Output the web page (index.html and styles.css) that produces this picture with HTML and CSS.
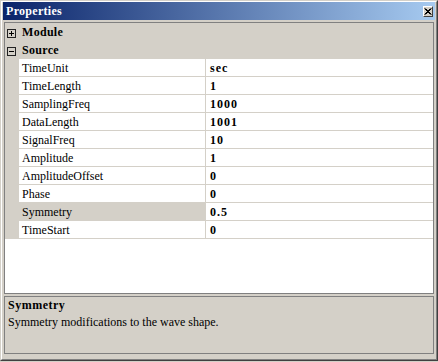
FILE: index.html
```html
<!DOCTYPE html>
<html lang="en">
<head>
    <meta charset="UTF-8">
    <title>Properties</title>
    <link rel="stylesheet" href="styles.css">
</head>
<body>

    <div class="window">
        <div class="frame">

            <!-- caption -->
            <div class="titlebar">
                <span class="title">Properties</span>
                <span class="close-btn">
                    <svg width="8" height="7" viewBox="0 0 8 7"><path d="M0.5 0.5 L6.5 6.5 M6.5 0.5 L0.5 6.5 M1.5 0.5 L7.5 6.5 M7.5 0.5 L1.5 6.5" stroke="#000" stroke-width="1" fill="none"/></svg>
                </span>
            </div>

            <!-- property grid -->
            <div class="grid">
                <div class="category">
                    <span class="expander">
                        <svg width="9" height="9" viewBox="0 0 9 9"><rect x="0.5" y="0.5" width="8" height="8" fill="none" stroke="#222"/><path d="M2 4.5 H7 M4.5 2 V7" stroke="#000"/></svg>
                    </span>
                    <span class="cat-name">Module</span>
                </div>
                <div class="category">
                    <span class="expander">
                        <svg width="9" height="9" viewBox="0 0 9 9"><rect x="0.5" y="0.5" width="8" height="8" fill="none" stroke="#222"/><path d="M2 4.5 H7" stroke="#000"/></svg>
                    </span>
                    <span class="cat-name">Source</span>
                </div>

                <div class="prop"><span class="name">TimeUnit</span><span class="value">sec</span></div>
                <div class="prop"><span class="name">TimeLength</span><span class="value">1</span></div>
                <div class="prop"><span class="name">SamplingFreq</span><span class="value">1000</span></div>
                <div class="prop"><span class="name">DataLength</span><span class="value">1001</span></div>
                <div class="prop"><span class="name">SignalFreq</span><span class="value">10</span></div>
                <div class="prop"><span class="name">Amplitude</span><span class="value">1</span></div>
                <div class="prop"><span class="name">AmplitudeOffset</span><span class="value">0</span></div>
                <div class="prop"><span class="name">Phase</span><span class="value">0</span></div>
                <div class="prop selected"><span class="name">Symmetry</span><span class="value">0.5</span></div>
                <div class="prop"><span class="name">TimeStart</span><span class="value">0</span></div>
            </div>

            <!-- help text -->
            <div class="description">
                <div class="desc-title">Symmetry</div>
                <div class="desc-text">Symmetry modifications to the wave shape.</div>
            </div>

        </div>
    </div>

</body>
</html>
```

FILE: styles.css
```css
/* page */
body {
    margin: 0;
    background-color: #d4d0c8;
    font-family: "Liberation Serif", "Noto Sans CJK TC", serif;
    font-size: 12px;
    color: #000;
}

/* window frame, classic 3D border */
.window {
    width: 438px;
    height: 361px;
    box-sizing: border-box;
    border: 1px solid;
    border-color: #d4d0c8 #404040 #404040 #d4d0c8;
}

.frame {
    height: 100%;
    box-sizing: border-box;
    border: 1px solid;
    border-color: #fff #808080 #808080 #fff;
    padding: 0 1px 1px 1px;
    display: flex;
    flex-direction: column;
}

/* caption bar */
.titlebar {
    height: 18px;
    display: flex;
    align-items: center;
    justify-content: space-between;
    background: linear-gradient(to right, #0a246a, #a6caf0);
    color: #fff;
}

.title {
    font-weight: bold;
    letter-spacing: 0.3px;
    padding-left: 3px;
}

.close-btn {
    width: 10px;
    height: 11px;
    box-sizing: border-box;
    margin-right: 2px;
    background: #d4d0c8;
    border: 1px solid;
    border-color: #fff #404040 #404040 #fff;
    display: flex;
    align-items: center;
    justify-content: center;
}

/* grid */
.grid {
    flex: 1;
    margin: 2px 1px 0 1px;
    border: 1px solid #808080;
    background: #fff;
}

.category {
    height: 18px;
    display: flex;
    align-items: center;
    background: #d4d0c8;
}

.expander {
    width: 17px;
    display: flex;
    padding-left: 2px;
    padding-top: 2px;
    box-sizing: border-box;
}

.cat-name {
    font-weight: bold;
    letter-spacing: 0.3px;
}

.prop {
    height: 17px;
    display: flex;
    border-bottom: 1px solid #d4d0c8;
    border-left: 14px solid #d4d0c8;
    line-height: 19px;
}

.name {
    width: 183px;
    padding-left: 3px;
    border-right: 1px solid #d4d0c8;
}

.value {
    padding-left: 4px;
    font-weight: bold;
    letter-spacing: 1px;
}

.selected .name {
    background: #d4d0c8;
}

/* help panel */
.description {
    height: 58px;
    box-sizing: border-box;
    margin: 2px 1px 4px 1px;
    border: 1px solid #808080;
    padding: 1px 3px;
}

.desc-title {
    font-weight: bold;
    letter-spacing: 0.5px;
    line-height: 14px;
}

.desc-text {
    line-height: 20px;
}
```
